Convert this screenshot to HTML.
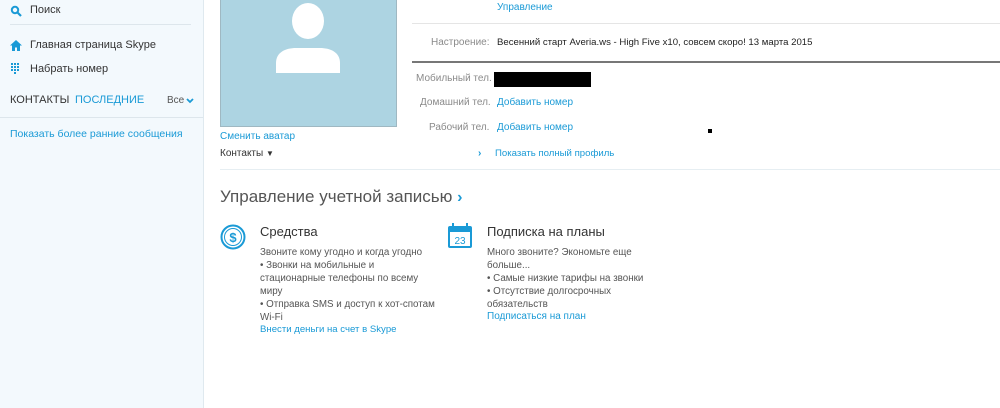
<!DOCTYPE html>
<html><head><meta charset="utf-8"><style>
*{margin:0;padding:0;box-sizing:border-box}
body{width:1000px;height:408px;background:#fff;font-family:"Liberation Sans","Noto Sans CJK SC",sans-serif;position:relative;overflow:hidden;color:#333}
.a{position:absolute;white-space:nowrap}
.side{position:absolute;left:0;top:0;width:204px;height:408px;background:#f3f9fd;border-right:1px solid #dfe9ef}
.blue{color:#1a9ad6}
.f11{font-size:11px}
.f10{font-size:10px}
.g{color:#8a8a8a}
</style></head><body>
<div class="side">
 <svg class="a" style="left:10px;top:5px" width="12" height="12" viewBox="0 0 12 12"><circle cx="5" cy="5" r="3.2" fill="none" stroke="#1a9ad6" stroke-width="2"/><path d="M7.5 7.5L11 11" stroke="#1a9ad6" stroke-width="2.2"/></svg>
 <div class="a f11" style="left:30px;top:4px;color:#333">Поиск</div>
 <div class="a" style="left:10px;top:24px;width:181px;height:1px;background:#dde6ec"></div>
 <svg class="a" style="left:10px;top:40px" width="12" height="11" viewBox="0 0 12 11"><path d="M6 0L0 5.5H2V11H5V7.5H7V11H10V5.5H12Z" fill="#1a9ad6"/></svg>
 <div class="a f11" style="left:30px;top:39px">Главная страница Skype</div>
 <svg class="a" style="left:11px;top:63px" width="8" height="11" viewBox="0 0 8 11" fill="#1a9ad6"><rect x="0" y="0" width="2" height="2"/><rect x="3" y="0" width="2" height="2"/><rect x="6" y="0" width="2" height="2"/><rect x="0" y="3" width="2" height="2"/><rect x="3" y="3" width="2" height="2"/><rect x="6" y="3" width="2" height="2"/><rect x="0" y="6" width="2" height="2"/><rect x="3" y="6" width="2" height="2"/><rect x="6" y="6" width="2" height="2"/><rect x="3" y="9" width="2" height="2"/></svg>
 <div class="a f11" style="left:30px;top:63px">Набрать номер</div>
 <div class="a f11" style="left:10px;top:94px;color:#333">КОНТАКТЫ</div>
 <div class="a f11 blue" style="left:75px;top:94px">ПОСЛЕДНИЕ</div>
 <div class="a" style="left:167px;top:95px;color:#555;font-size:10px">Все</div>
 <svg class="a" style="left:186px;top:98px" width="8" height="6" viewBox="0 0 8 6"><path d="M1 1L4 4L7 1" stroke="#1a9ad6" stroke-width="1.8" fill="none"/></svg>
 <div class="a" style="left:0;top:117px;width:203px;height:1px;background:#dde6ec"></div>
 <div class="a blue" style="left:10px;top:128px;font-size:10.5px">Показать более ранние сообщения</div>
</div>

<div class="a" style="left:220px;top:0;width:177px;height:127px;background:#add4e2;border:1px solid #9fb8c2;border-top:none"></div>
<svg class="a" style="left:274px;top:3px" width="68" height="70" viewBox="0 0 68 70"><ellipse cx="34" cy="18" rx="16" ry="18" fill="#fff"/><path d="M2 70V60C2 49 12 45 22 45H46C56 45 66 49 66 60V70Z" fill="#fff"/></svg>
<div class="a f10 blue" style="left:220px;top:131px">Сменить аватар</div>
<div class="a f10" style="left:220px;top:148px;color:#333">Контакты <span style="font-size:8px">▼</span></div>

<div class="a f10 blue" style="left:497px;top:2px">Управление</div>
<div class="a" style="left:412px;top:23px;width:588px;height:1px;background:#e5e5e5"></div>
<div class="a f10 g" style="left:431px;top:37px">Настроение:</div>
<div class="a" style="left:497px;top:37px;color:#222;font-size:9.6px">Весенний старт Averia.ws - High Five x10, совсем скоро! 13 марта 2015</div>
<div class="a" style="left:412px;top:61px;width:588px;height:2px;background:#777"></div>
<div class="a f10 g" style="left:416px;top:73px">Мобильный тел.</div>
<div class="a" style="left:494px;top:72px;width:97px;height:15px;background:#000"></div>
<div class="a f10 g" style="left:420px;top:97px">Домашний тел.</div>
<div class="a f10 blue" style="left:497px;top:97px">Добавить номер</div>
<div class="a f10 g" style="left:429px;top:122px">Рабочий тел.</div>
<div class="a f10 blue" style="left:497px;top:122px">Добавить номер</div>
<div class="a" style="left:708px;top:129px;width:4px;height:4px;background:#000"></div>
<div class="a f10 blue" style="left:478px;top:148px;font-weight:bold">›</div>
<div class="a blue" style="left:495px;top:148px;font-size:9.6px">Показать полный профиль</div>
<div class="a" style="left:220px;top:169px;width:780px;height:1px;background:#e6eef2"></div>

<div class="a" style="left:220px;top:187px;font-size:17px;color:#555">Управление учетной записью <span class="blue" style="font-weight:bold;font-size:16px">›</span></div>

<svg class="a" style="left:220px;top:224px" width="26" height="26" viewBox="0 0 26 26"><circle cx="13" cy="13" r="11.5" fill="none" stroke="#1a9ad6" stroke-width="2"/><circle cx="13" cy="13" r="8.5" fill="none" stroke="#1a9ad6" stroke-width="1"/><text x="13" y="18" text-anchor="middle" font-family="Liberation Sans" font-weight="bold" font-size="13" fill="#1a9ad6">$</text></svg>
<div class="a" style="left:260px;top:224px;font-size:13px;color:#333">Средства</div>
<div class="a" style="left:260px;top:246px;line-height:13px;color:#555;font-size:9.8px">Звоните кому угодно и когда угодно<br>• Звонки на мобильные и<br>стационарные телефоны по всему<br>миру<br>• Отправка SMS и доступ к хот-спотам<br>Wi-Fi</div>
<div class="a blue" style="left:260px;top:324px;font-size:9.6px">Внести деньги на счет в Skype</div>

<svg class="a" style="left:447px;top:223px" width="26" height="26" viewBox="0 0 26 26"><rect x="1" y="3" width="24" height="22" rx="2" fill="#1a9ad6"/><rect x="3" y="9" width="20" height="14" fill="#fff"/><rect x="5" y="0" width="2" height="6" fill="#1a9ad6"/><rect x="19" y="0" width="2" height="6" fill="#1a9ad6"/><text x="13" y="21" text-anchor="middle" font-family="Liberation Sans" font-size="10" fill="#1a9ad6">23</text></svg>
<div class="a" style="left:487px;top:224px;font-size:13px;color:#333">Подписка на планы</div>
<div class="a" style="left:487px;top:246px;line-height:13px;color:#555;font-size:9.8px">Много звоните? Экономьте еще<br>больше...<br>• Самые низкие тарифы на звонки<br>• Отсутствие долгосрочных<br>обязательств</div>
<div class="a f10 blue" style="left:487px;top:311px">Подписаться на план</div>
</body></html>
